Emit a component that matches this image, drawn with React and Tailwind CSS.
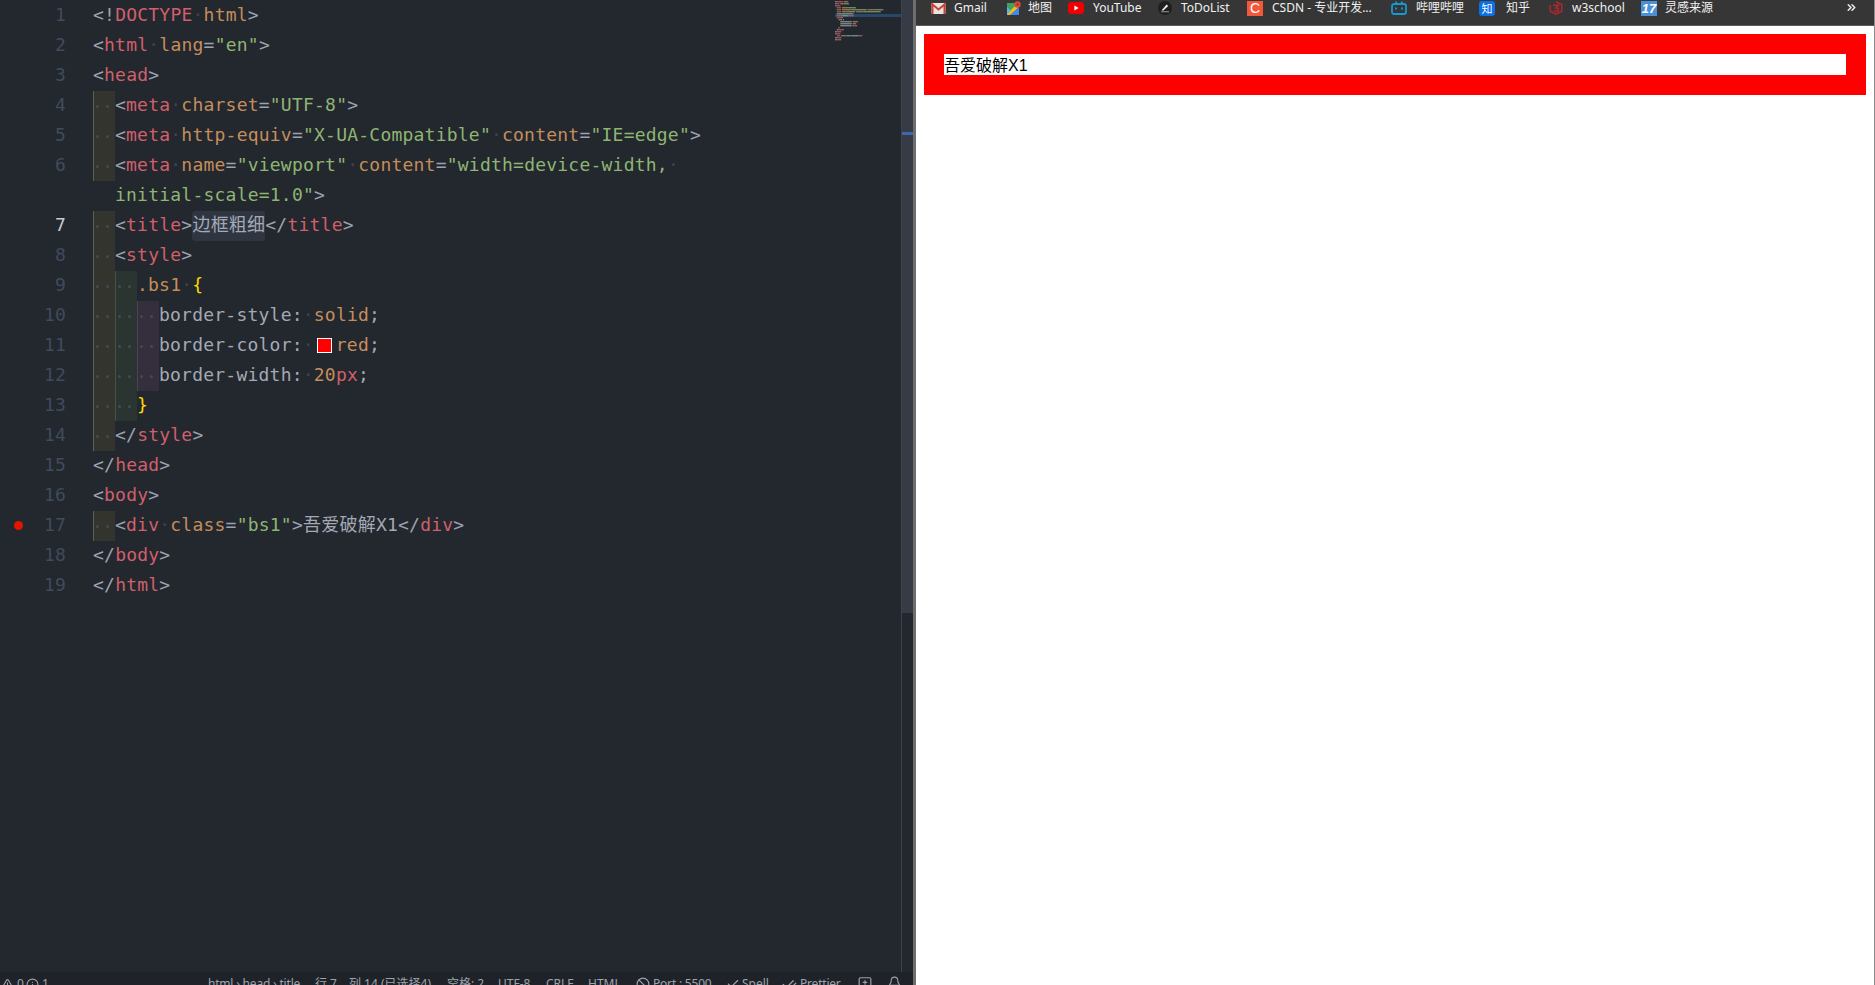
import { TriangleAlert, Info, Ban, Check, CheckCheck, MessageSquarePlus, Bell, ChevronsRight } from 'lucide-react';

const P = '#9ba2b0'; // punctuation
const T = '#d0606b'; // tag
const A = '#c48e5c'; // attribute
const S = '#8fb573'; // string
const X = '#a3a9b5'; // plain text
const Y = '#ffd700'; // brace

// [text, colour], a space is drawn as a dim dot
const lines = [
  { n: 1, parts: [['<!', P], ['DOCTYPE', T], [' '], ['html', A], ['>', P]] },
  { n: 2, parts: [['<', P], ['html', T], [' '], ['lang', A], ['=', P], ['"en"', S], ['>', P]] },
  { n: 3, parts: [['<', P], ['head', T], ['>', P]] },
  { n: 4, g: 1, parts: [['<', P], ['meta', T], [' '], ['charset', A], ['=', P], ['"UTF-8"', S], ['>', P]] },
  { n: 5, g: 1, parts: [['<', P], ['meta', T], [' '], ['http-equiv', A], ['=', P], ['"X-UA-Compatible"', S], [' '], ['content', A], ['=', P], ['"IE=edge"', S], ['>', P]] },
  { n: 6, g: 1, parts: [['<', P], ['meta', T], [' '], ['name', A], ['=', P], ['"viewport"', S], [' '], ['content', A], ['=', P], ['"width=device-width,', S], [' ']] },
  { wrap: true, parts: [['initial-scale=1.0"', S], ['>', P]] },
  { n: 7, g: 1, active: true, parts: [['<', P], ['title', T], ['>', P], ['边框粗细', X, true], ['</', P], ['title', T], ['>', P]] },
  { n: 8, g: 1, parts: [['<', P], ['style', T], ['>', P]] },
  { n: 9, g: 2, parts: [['.bs1', A], [' '], ['{', Y]] },
  { n: 10, g: 3, parts: [['border-style:', X], [' '], ['solid', A], [';', X]] },
  { n: 11, g: 3, swatch: true, parts: [['border-color:', X], [' ']], after: [['red', A], [';', X]] },
  { n: 12, g: 3, parts: [['border-width:', X], [' '], ['20', A], ['px', T], [';', X]] },
  { n: 13, g: 2, parts: [['}', Y]] },
  { n: 14, g: 1, parts: [['</', P], ['style', T], ['>', P]] },
  { n: 15, parts: [['</', P], ['head', T], ['>', P]] },
  { n: 16, parts: [['<', P], ['body', T], ['>', P]] },
  { n: 17, g: 1, dot: true, parts: [['<', P], ['div', T], [' '], ['class', A], ['=', P], ['"bs1"', S], ['>', P], ['吾爱破解X1', X], ['</', P], ['div', T], ['>', P]] },
  { n: 18, parts: [['</', P], ['body', T], ['>', P]] },
  { n: 19, parts: [['</', P], ['html', T], ['>', P]] },
];

const guides = [
  'bg-[#33342e] border-l border-[#5e5f55]',
  'bg-[#2a3531] border-l border-[#46524b]',
  'bg-[#352e3d] border-l border-[#4b4256]',
];

function Guide({ level }) {
  return (
    <div className={`w-[22px] h-full shrink-0 box-border flex items-center pl-[2px] gap-[7px] ${guides[level]}`}>
      <span className="w-[3px] h-[3px] rounded-full bg-[#454a50]" />
      <span className="w-[3px] h-[3px] rounded-full bg-[#454a50]" />
    </div>
  );
}

function Tokens({ parts }) {
  return parts.map(([text, color, selected], i) => {
    if (text === ' ') {
      return <span key={i} className="w-[11.06px] text-center text-[#3f444d]">·</span>;
    }
    if (selected) {
      return <span key={i} className="bg-[#2f3541] rounded-[3px] h-[30px]" style={{ color }}>{text}</span>;
    }
    return <span key={i} style={{ color }}>{text}</span>;
  });
}

function CodeLine({ line }) {
  return (
    <div className="h-[30px] flex items-center">
      <div className="w-[93px] h-full shrink-0 relative flex items-start justify-end pr-[27px] leading-[28px]">
        {line.dot && <span className="absolute left-[14px] top-[10px] w-[9px] h-[9px] rounded-full bg-[#e51400]" />}
        <span className={line.active ? 'text-[#c5cad3]' : 'text-[#414b5c]'}>{line.n}</span>
      </div>
      {line.wrap && <div className="w-[22px] shrink-0" />}
      {line.g >= 1 && <Guide level={0} />}
      {line.g >= 2 && <Guide level={1} />}
      {line.g >= 3 && <Guide level={2} />}
      <div className="whitespace-pre flex items-start h-full leading-[28px]">
        <Tokens parts={line.parts} />
        {line.swatch && <span className="w-[15px] h-[15px] ml-[3px] mr-[4px] mt-[7px] bg-[#ff0000] border border-white" />}
        {line.after && <Tokens parts={line.after} />}
      </div>
    </div>
  );
}

function Minimap() {
  return (
    <svg width="66" height="60" className="block">
      <rect x="0" y="14" width="66" height="3" fill="#26496b" />
      {lines.map((line, row) => {
        const indent = (line.g || 0) * 2 + (line.wrap ? 2 : 0);
        let col = indent;
        return [...line.parts, ...(line.after || [])].map(([text, color], i) => {
          const x = col * 0.88;
          col += text.length;
          if (text === ' ') return null;
          return <rect key={`${row}-${i}`} x={x} y={row * 2 + 1} width={text.length * 0.88} height="1.4" fill={color} opacity="0.7" />;
        });
      })}
    </svg>
  );
}

function StatusBar() {
  return (
    <div className="h-[13px] overflow-hidden bg-[#1f2329] flex items-start pt-[4px] text-[12px] leading-[16px] text-[#9da3ad] whitespace-nowrap font-['Noto_Sans','Noto_Sans_CJK_SC',sans-serif]">
      <div className="w-[208px] flex items-center">
        <TriangleAlert size={13} className="ml-[1px]" />
        <span className="ml-[3px]">0</span>
        <Info size={13} className="ml-[2px]" />
        <span className="ml-[3px]">1</span>
      </div>
      <span className="w-[107px] tracking-[-0.2px]">html › head › title</span>
      <span className="w-[132px]">行 7，列 14 (已选择4)</span>
      <span className="w-[51px]">空格: 2</span>
      <span className="w-[48px]">UTF-8</span>
      <span className="w-[42px]">CRLF</span>
      <span className="w-[48px]">HTML</span>
      <div className="w-[90px] flex items-center gap-[3px]">
        <Ban size={14} />
        <span className="tracking-[-0.2px]">Port : 5500</span>
      </div>
      <div className="w-[56px] flex items-center gap-[2px]">
        <Check size={14} />
        <span>Spell</span>
      </div>
      <div className="w-[76px] flex items-center gap-[3px]">
        <CheckCheck size={15} />
        <span className="tracking-[-0.2px]">Prettier</span>
      </div>
      <MessageSquarePlus size={14} className="mr-[16px]" />
      <Bell size={13} />
    </div>
  );
}

function GmailIcon() {
  return (
    <svg width="15" height="13" viewBox="0 0 15 13">
      <rect x="0.5" y="1" width="14" height="11" rx="1" fill="#e8e4e0" />
      <path d="M1.5 12V2.5L7.5 7.5L13.5 2.5V12" fill="none" stroke="#c9423a" strokeWidth="2" />
    </svg>
  );
}

function MapsIcon() {
  return (
    <svg width="15" height="14" viewBox="0 0 15 14">
      <path d="M1 2H10V14H1Z" fill="#3fa45b" />
      <path d="M1 13L10 4H13V6L4 14H1Z" fill="#f4c20d" />
      <path d="M4 14L13 6V14Z" fill="#4285f4" />
      <path d="M1 6L5 10L1 14Z" fill="#6fa8f0" />
      <circle cx="11.5" cy="3.5" r="3.2" fill="#d9483b" />
      <circle cx="11.5" cy="3.5" r="1.1" fill="#8c2a22" />
    </svg>
  );
}

function YoutubeIcon() {
  return (
    <svg width="16" height="12" viewBox="0 0 16 12">
      <rect width="16" height="12" rx="3" fill="#f00000" />
      <path d="M6.4 3.6L10.6 6L6.4 8.4Z" fill="#fff" />
    </svg>
  );
}

function TodoIcon() {
  return (
    <svg width="14" height="14" viewBox="0 0 14 14">
      <circle cx="7" cy="7" r="7" fill="#1f1f1f" />
      <path d="M3.5 9.6L8.6 3.6L10.2 5L5.4 9.6Z" fill="#eee" />
      <path d="M7 10.4H11V11.2H3.2V10.4Z" fill="#bbb" />
    </svg>
  );
}

function CsdnIcon() {
  return (
    <span className="w-[16px] h-[15px] bg-[#f4583a] text-white text-[14px] leading-[15px] text-center font-['Liberation_Sans',sans-serif]">C</span>
  );
}

function BiliIcon() {
  return (
    <svg width="16" height="14" viewBox="0 0 16 14" fill="none" stroke="#149ad0">
      <rect x="1" y="3" width="14" height="10" rx="2" strokeWidth="1.8" />
      <path d="M4.5 0.5L6.5 3M11.5 0.5L9.5 3" strokeWidth="1.4" />
      <path d="M5 6.5V8.5M11 6.5V8.5" strokeWidth="1.8" />
    </svg>
  );
}

function ZhihuIcon() {
  return (
    <span className="w-[16px] h-[15px] rounded-[3px] bg-[#0a70e6] text-white text-[11px] leading-[15px] text-center">知</span>
  );
}

function W3Icon() {
  return (
    <svg width="14" height="14" viewBox="0 0 14 14" fill="none" stroke="#b3272d" strokeWidth="1.5">
      <path d="M7 0.8L12.8 3.4V10L7 13.2L1.2 10V4" />
      <path d="M4 4.2H9.6L6.8 6.8C9 6.6 10 8 9.4 9.2C8.8 10.4 6.6 10.6 5 9.6" />
    </svg>
  );
}

function LinggangIcon() {
  return (
    <span className="w-[16px] h-[15px] bg-[#4a90d9] text-white text-[13px] leading-[15px] text-center italic font-bold font-['Liberation_Sans',sans-serif]">17</span>
  );
}

const bookmarks = [
  { name: 'Gmail', icon: <GmailIcon />, box: 'w-[75px] gap-[8px]' },
  { name: '地图', icon: <MapsIcon />, box: 'w-[62px] gap-[7px]' },
  { name: 'YouTube', icon: <YoutubeIcon />, box: 'w-[90px] gap-[9px]' },
  { name: 'ToDoList', icon: <TodoIcon />, box: 'w-[89px] gap-[9px]' },
  { name: 'CSDN - 专业开发...', icon: <CsdnIcon />, box: 'w-[144px] gap-[9px]' },
  { name: '哔哩哔哩', icon: <BiliIcon />, box: 'w-[88px] gap-[9px]' },
  { name: '知乎', icon: <ZhihuIcon />, box: 'w-[70px] gap-[11px]' },
  { name: 'w3school', icon: <W3Icon />, box: 'w-[92px] gap-[9px]' },
  { name: '灵感来源', icon: <LinggangIcon />, box: 'w-[204px] gap-[8px]' },
];

export default function App() {
  return (
    <div className="w-[1875px] h-[985px] flex overflow-hidden bg-white">
      {/* editor */}
      <div className="w-[913px] shrink-0 flex flex-col bg-[#23272e]">
        <div className="h-[972px] flex">
          <div className="w-[835px] shrink-0 pt-[1px] text-[18px] tracking-[0.22px] leading-[30px] font-['DejaVu_Sans_Mono','Noto_Sans_CJK_SC',monospace]">
            {lines.map((line, i) => (
              <CodeLine key={i} line={line} />
            ))}
          </div>
          <div className="w-[66px] shrink-0">
            <Minimap />
          </div>
          <div className="w-[12px] shrink-0 border-l border-[#3d424d] box-border relative">
            <div className="h-[613px] bg-[#363b45]" />
            <div className="absolute left-0 right-0 top-[132px] h-[3px] bg-[#3f66ad]" />
          </div>
        </div>
        <StatusBar />
      </div>
      <div className="w-[3px] shrink-0 bg-[#6e6e6e]" />

      {/* browser */}
      <div className="flex-1 flex flex-col border-r border-[#8a8a8a] box-border min-w-0">
        <div className="h-[26px] shrink-0 bg-[#363636] border-b border-[#5c5c5c] box-border flex items-start pl-[15px] pt-[1px] text-[12px] leading-[14px] text-[#f1f1f1] whitespace-nowrap font-['Noto_Sans','Noto_Sans_CJK_SC',sans-serif]">
          {bookmarks.map((b) => (
            <div key={b.name} className={`${b.box} shrink-0 flex items-center h-[14px]`}>
              {b.icon}
              <span>{b.name}</span>
            </div>
          ))}
          <ChevronsRight size={13} strokeWidth={3} className="text-[#e8e8e8]" />
        </div>
        <div className="flex-1 m-[8px] mb-0">
          <div className="border-[20px] border-solid border-[#ff0000] pt-[2px] text-[16px] leading-[19px] text-black font-['Liberation_Sans','Noto_Sans_CJK_SC',sans-serif]">吾爱破解X1</div>
        </div>
      </div>
    </div>
  );
}
